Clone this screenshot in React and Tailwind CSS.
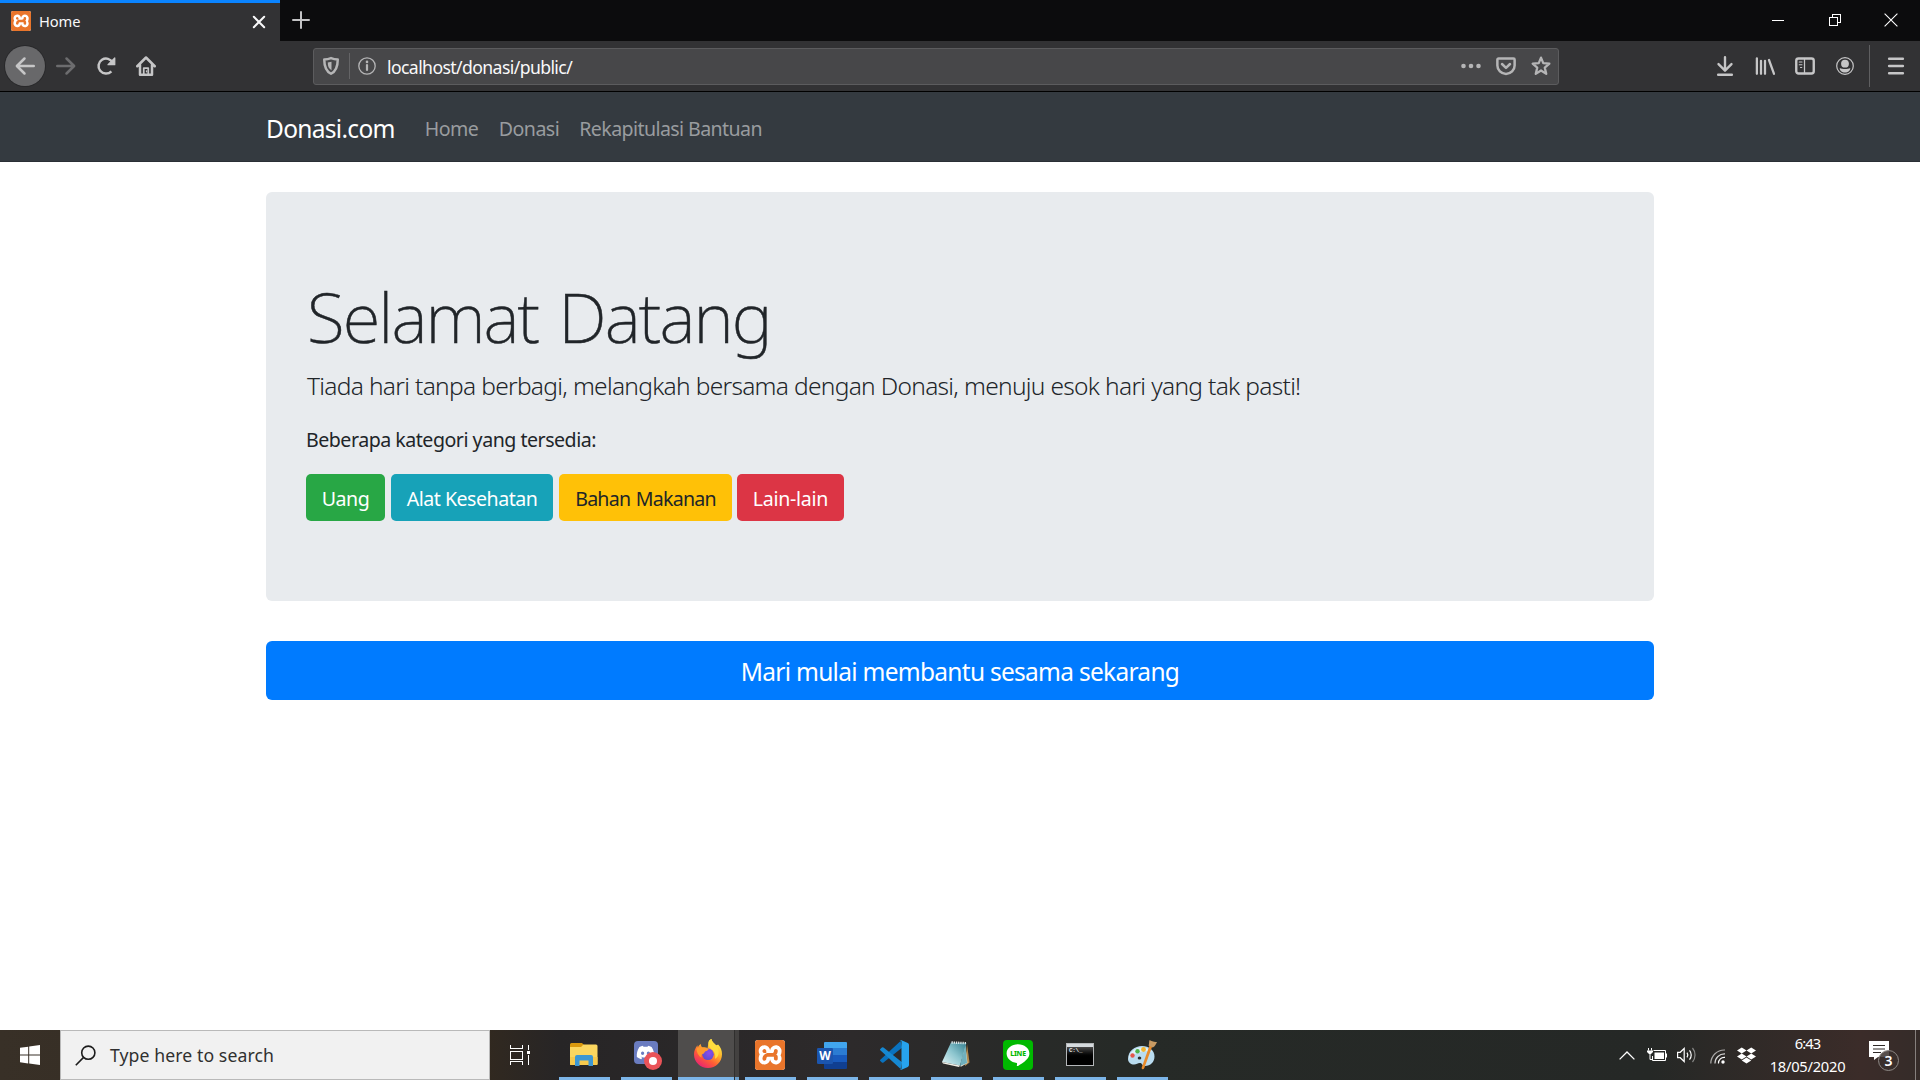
import React from "react";
import { SiXampp } from "react-icons/si";
import { FaDiscord, FaDropbox } from "react-icons/fa";

const NAV_BUTTON = "flex h-10 w-10 shrink-0 items-center justify-center";

function Glyph({ children, className = "h-5 w-5", box = "0 0 16 16" }) {
  return (
    <svg
      viewBox={box}
      className={className}
      fill="none"
      stroke="currentColor"
      strokeWidth="2"
      strokeLinecap="round"
      strokeLinejoin="round"
    >
      {children}
    </svg>
  );
}

function XamppLogo({ className }) {
  return (
    <span className={`flex items-center justify-center overflow-hidden bg-white ${className}`}>
      <SiXampp className="h-full w-full scale-105 text-[#e9752b]" />
    </span>
  );
}

function TitleBar() {
  return (
    <div className="flex h-[41px] bg-[#0c0c0d] text-[#f9f9fa]">
      <div className="flex w-[280px] items-start border-t-[3px] border-[#0a84ff] bg-[#323234] pt-[8px] pl-[11px] pr-[14px]">
        <XamppLogo className="h-5 w-5 rounded-[2px]" />
        <span className="ml-[8px] flex-1 text-[14.7px] leading-5 tracking-[-0.1px]">Home</span>
        <svg viewBox="0 0 14 14" className="mt-[4px] h-[14px] w-[14px]" stroke="currentColor" strokeWidth="2" strokeLinecap="round">
          <path d="M1.8 1.8l10.4 10.4M12.2 1.8L1.8 12.2" />
        </svg>
      </div>
      <svg viewBox="0 0 18 18" className="mt-[11px] ml-[12px] h-[18px] w-[18px] text-[#c4c4c5]" stroke="currentColor" strokeWidth="2" strokeLinecap="round">
        <path d="M9 1v16M1 9h16" />
      </svg>
      <div className="ml-auto flex pb-px text-white">
        <span className="flex w-[57px] items-center justify-center">
          <span className="h-px w-3 bg-white" />
        </span>
        <span className="flex w-[57px] items-center justify-center">
          <svg viewBox="0 0 12 12" className="h-3 w-3" fill="none" stroke="currentColor" shapeRendering="crispEdges">
            <path d="M.5 3.5h8v8h-8zM3.5 3V.5h8v8H9" />
          </svg>
        </span>
        <span className="flex w-[57px] items-center justify-center pr-px">
          <svg viewBox="0 0 14 14" className="h-[14px] w-[14px]" stroke="currentColor" strokeWidth="1.1">
            <path d="M.6.6l12.8 12.8M13.4.6L.6 13.4" />
          </svg>
        </span>
      </div>
    </div>
  );
}

function AddressBar() {
  return (
    <div className="ml-[147px] flex h-[37px] w-[1246px] shrink-0 items-center rounded-[3px] border border-[#5c5c5e] bg-[#474749] text-[#b5b5b6]">
      <Glyph className="ml-[7px] h-5 w-5">
        <path d="M8 1.700c1.800.7 3.600 1 5.400 1 0 5.400-1 9.200-5.400 11.500C3.600 11.900 2.600 8.100 2.600 2.700c1.800 0 3.600-.3 5.400-1z" />
        <path d="M8.400 4.600L5.400 5.200c0 3 .7 4.800 3 6.200z" fill="currentColor" stroke="none" />
      </Glyph>
      <span className="ml-[8px] h-[26px] w-px bg-[#646466]" />
      <svg viewBox="0 0 18 18" className="ml-[8px] h-[18px] w-[18px]" fill="none" stroke="currentColor">
        <circle cx="9" cy="9" r="8.200" strokeWidth="1.300" />
        <path d="M9 8v5" strokeWidth="2.200" strokeLinecap="round" />
        <circle cx="9" cy="4.900" r="1.300" fill="currentColor" stroke="none" />
      </svg>
      <span className="ml-[11px] flex-1 pt-[2px] text-[17.640px] leading-6 tracking-[-0.6px] text-[#f9f9fa]">localhost/donasi/public/</span>
      <svg viewBox="0 0 20 6" className="h-[6px] w-5" fill="currentColor">
        <circle cx="2.500" cy="3" r="2.300" />
        <circle cx="10" cy="3" r="2.300" />
        <circle cx="17.500" cy="3" r="2.300" />
      </svg>
      <Glyph className="ml-[15px] h-5 w-5">
        <path d="M2 2h12a.9.900 0 0 1 .9.900v4.600a6.900 6.900 0 0 1-13.800 0V2.900A.9.900 0 0 1 2 2z" />
        <path d="M4.800 6.400L8 9.500l3.200-3.100" />
      </Glyph>
      <Glyph className="mr-[7px] ml-[15px] h-5 w-5">
        <path d="M8 1.300l1.800 4.400 4.900.4-3.700 3.200 1.200 5-4.200-2.700-4.200 2.700 1.200-5L1.300 6.100l4.900-.4z" strokeWidth="1.800" />
      </Glyph>
    </div>
  );
}

function Toolbar() {
  return (
    <div className="flex h-[51px] items-center border-b border-black bg-[#323234] pl-[5px] text-[#c6c6c7]">
      <span className={`${NAV_BUTTON} rounded-full bg-[#68686a] ring-1 ring-[#29292b]`}>
        <Glyph>
          <path d="M15 8H1.600M7.600 2L1.500 8l6.100 6" />
        </Glyph>
      </span>
      <span className={`${NAV_BUTTON} ml-px text-[#6c6c6e]`}>
        <Glyph>
          <path d="M1 8h13.400M8.400 2l6.100 6-6.100 6" />
        </Glyph>
      </span>
      <span className={NAV_BUTTON}>
        <Glyph>
          <path d="M12.300 12.300A6 6 0 1 1 13.400 5.400" strokeLinecap="butt" />
          <path d="M15 1.500v5.400H9.600z" fill="currentColor" strokeWidth="1" />
        </Glyph>
      </span>
      <span className={NAV_BUTTON}>
        <Glyph>
          <path d="M1 8.200l7-7 7 7M3.200 7v8h9.600V7" />
          <path d="M6.200 15V9.600h3.600V15" strokeWidth="1.400" />
          <path d="M8.400 11.800v.8" strokeWidth="1" />
        </Glyph>
      </span>
      <AddressBar />
      <div className="ml-auto flex items-center pr-1">
        <span className={NAV_BUTTON}>
          <Glyph>
            <path d="M8 1v10M2.800 6.500L8 11.700l5.200-5.200M2.500 15h11" strokeWidth="1.900" />
          </Glyph>
        </span>
        <span className={NAV_BUTTON}>
          <Glyph>
            <path d="M1.500 1.800v12.400M4.800 3.800v10.400M8 3.800v10.400M11.200 3.200l4 11" strokeWidth="1.800" />
          </Glyph>
        </span>
        <span className={NAV_BUTTON}>
          <Glyph>
            <rect x="1" y="2" width="14" height="12" rx="1.800" strokeWidth="1.900" />
            <path d="M7.600 2v12" strokeWidth="1" />
            <path d="M3.400 4.800h2.200M3.400 7h2.200M4.400 9.200h1" strokeWidth=".9" />
          </Glyph>
        </span>
        <span className={NAV_BUTTON}>
          <svg viewBox="0 0 18 18" className="h-[18px] w-[18px]" fill="currentColor">
            <circle cx="9" cy="9" r="8.300" fill="none" stroke="currentColor" strokeWidth="1.200" />
            <circle cx="9" cy="6.700" r="3.900" />
            <path d="M3.800 10.900c2.300 1.400 8.100 1.400 10.400 0 .3 2.500-2.100 4.600-5.200 4.600s-5.500-2.100-5.200-4.600z" />
          </svg>
        </span>
        <span className="mr-[6px] ml-[4px] h-[42px] w-px bg-[#5f5f61]" />
        <span className={NAV_BUTTON}>
          <Glyph>
            <path d="M2.500 2.200h11M2.500 8h11M2.500 13.800h11" />
          </Glyph>
        </span>
      </div>
    </div>
  );
}

function SiteNav() {
  return (
    <nav className="h-[70px] border-b border-[#2a2f35] bg-[#343a40] pt-[5px]">
      <div className="mx-auto flex h-full w-[1388px] items-center leading-[30px]">
        <a className="text-[24.500px] tracking-[-0.7px] text-white">Donasi.com</a>
        <a className="ml-[30px] text-[19.600px] tracking-[-0.564px] text-[#999c9f]">Home</a>
        <a className="ml-[20.500px] text-[19.600px] tracking-[-0.529px] text-[#999c9f]">Donasi</a>
        <a className="ml-[20px] text-[19.600px] tracking-[-0.600px] text-[#999c9f]">Rekapitulasi Bantuan</a>
      </div>
    </nav>
  );
}

const CATEGORY = "flex h-[47px] items-center justify-center rounded-[5px] pt-[3px] text-[19.600px]";

function Jumbotron() {
  return (
    <section className="mt-[30px] h-[409px] rounded-[6px] bg-[#e8ebee] px-10 pt-[82px] text-[#212529]">
      <h1 className="mb-[9px] pl-px text-[69px] leading-[84px] font-extralight tracking-[-1.9px] [-webkit-text-stroke:0.5px_#212529] [word-spacing:4px]">Selamat Datang</h1>
      <p className="mb-5 pl-px text-[24.500px] leading-[37.500px] font-light tracking-[-0.715px] [word-spacing:0.2px] whitespace-nowrap">
        Tiada hari tanpa berbagi, melangkah bersama dengan Donasi, menuju esok hari yang tak pasti!
      </p>
      <p className="mb-[19.500px] text-[19.600px] leading-[30px] tracking-[-0.490px]">Beberapa kategori yang tersedia:</p>
      <div className="flex text-white">
        <a className={`${CATEGORY} w-[79px] bg-[#28a745] tracking-[-0.475px]`}>Uang</a>
        <a className={`${CATEGORY} ml-[6px] w-[162px] bg-[#17a2b8] tracking-[-0.501px]`}>Alat Kesehatan</a>
        <a className={`${CATEGORY} ml-[6px] w-[173px] bg-[#ffc107] tracking-[-0.750px] text-[#212529]`}>
          <span className="[word-spacing:1px]">Bahan Makanan</span>
        </a>
        <a className={`${CATEGORY} ml-[5px] w-[107px] bg-[#dc3545] tracking-[-0.292px]`}>Lain-lain</a>
      </div>
    </section>
  );
}

function FolderIcon() {
  return (
    <svg viewBox="0 0 28 24" className="h-6 w-7">
      <path d="M0 1.500A1.500 1.500 0 0 1 1.500 0H12l2 2-2 2.500H0z" fill="#d9980d" />
      <path d="M0 4h11l2.500-2.500H26A1.500 1.500 0 0 1 27.500 3v18a1 1 0 0 1-1 1H1a1 1 0 0 1-1-1z" fill="#fbd65f" />
      <path d="M0 14h27.500v7a1 1 0 0 1-1 1H1a1 1 0 0 1-1-1z" fill="#f6c94c" />
      <path d="M5 23V14a2 2 0 0 1 2-2h14a2 2 0 0 1 2 2v9h-4.500v-5.500h-9V23z" fill="#3d97d3" />
    </svg>
  );
}

function DiscordIcon() {
  return (
    <span className="relative ml-[3px] flex h-7 w-7">
      <span className="flex h-[23px] w-6 items-center justify-center rounded-[4px] bg-[#6a7cc0]">
        <FaDiscord className="h-[19px] w-[19px] text-white" />
      </span>
      <span className="absolute top-[11px] left-[10px] flex h-[18px] w-[18px] items-center justify-center rounded-full bg-[#ea5358]">
        <span className="h-2 w-2 rounded-full bg-white" />
      </span>
    </span>
  );
}

function FirefoxIcon() {
  return (
    <svg viewBox="0 0 30 30" className="h-[30px] w-[30px]">
      <defs>
        <linearGradient id="ffBody" x1=".85" y1=".1" x2=".25" y2="1">
          <stop offset="0" stopColor="#fff04a" />
          <stop offset=".35" stopColor="#ffb129" />
          <stop offset=".65" stopColor="#ff5d35" />
          <stop offset="1" stopColor="#e81f76" />
        </linearGradient>
        <radialGradient id="ffGlobe" cx=".6" cy=".4" r=".6">
          <stop offset="0" stopColor="#8f4bee" />
          <stop offset="1" stopColor="#5b4fd0" />
        </radialGradient>
      </defs>
      <path d="M15.500 3.600c.3-2 1.500-3 3-3.600.2 2.800 2.600 4.300 4.600 6.200 2.500-.1 1.600-1.200 1.600-1.200 3.200 3.300 4.300 6.600 4.300 10.200C29 23 22.800 29 15 29S1 22.900 1 15.400c0-3.700 1.400-6.700 3.500-9.200 0 0 0 1.400.4 2.100C5.400 6.500 6.900 5.300 7.900 4.900c-.1 1.700.7 3 1.800 3.500 1.600-.3 3.400-.1 4.900.6z" fill="url(#ffBody)" />
      <circle cx="15" cy="15.300" r="5.800" fill="url(#ffGlobe)" />
      <path d="M15.500 3.600c.3-2 1.500-3 3-3.600.2 3.600 6 5.700 7 11.200.8 4.200-1 7.300-3.500 8.600.8-4-.2-6.900-2.600-8.700-2.300-1.700-4.200-4-3.900-7.500z" fill="#ffdc3e" />
      <path d="M3.500 9.500c2.600-1.600 5.800-1.600 8.600-.4.900.5 2.700.5 3.600.9-.4 1.300-1.900 1.900-3.200 2.300-1 .4-.8 1.400-1.700 2.300-2 .6-2.800 1.900-2.100 4.100-3.600-2.200-5.200-5.300-5.200-9.200z" fill="#ff9a2e" />
    </svg>
  );
}

function WordIcon() {
  return (
    <span className="relative block h-7 w-[30px]">
      <svg viewBox="0 0 30 28" className="h-7 w-[30px]">
        <path d="M8 1h21a1 1 0 0 1 1 1v5H7V2a1 1 0 0 1 1-1z" fill="#41a5ee" />
        <path d="M7 7h23v7H7z" fill="#2b7cd3" />
        <path d="M7 14h23v7H7z" fill="#185abd" />
        <path d="M7 21h23v6a1 1 0 0 1-1 1H8a1 1 0 0 1-1-1z" fill="#103f91" />
        <rect x="0" y="7" width="16" height="16" rx="1.300" fill="#1b55ae" />
      </svg>
      <span className="absolute top-[7px] left-0 w-4 text-center text-[12px] leading-4 font-bold text-white">W</span>
    </span>
  );
}

function CodeIcon() {
  return (
    <svg viewBox="0 0 30 30" className="h-[30px] w-[30px]">
      <path d="M1.300 19.700L21.600.9 23 7.700 4.500 22.400a1.300 1.300 0 0 1-1.600 0l-1.600-1.300a1 1 0 0 1 0-1.400z" fill="#0a72be" />
      <path d="M1.300 10.300L21.600 29.100 23 22.300 4.500 7.600a1.300 1.300 0 0 0-1.600 0L1.300 8.900a1 1 0 0 0 0 1.400z" fill="#1688d2" />
      <path d="M22.500.2l6.300 2.900A2 2 0 0 1 30 4.900v20.200a2 2 0 0 1-1.200 1.800l-6.300 2.900c-.8.300-1.500 0-1.900-.5.8.6 1.900.1 1.900-.9V1.600c0-1-1.100-1.500-1.900-.9.400-.6 1.100-.8 1.900-.5z" fill="#27a3ee" />
    </svg>
  );
}

function NotepadIcon() {
  return (
    <svg viewBox="0 0 30 30" className="h-[30px] w-[30px]">
      <defs>
        <linearGradient id="padSheet" x1="1" y1="0" x2="0" y2="1">
          <stop offset="0" stopColor="#337f90" />
          <stop offset=".5" stopColor="#8dc6cf" />
          <stop offset="1" stopColor="#e3f4f5" />
        </linearGradient>
      </defs>
      <path d="M26 4l2.500 18.500L24 26z" fill="#b28a4e" />
      <path d="M24 3l2.500 20-7 4z" fill="#e6e2d4" />
      <path d="M10 2.500L25.500 3 19 25.500 1 22z" fill="url(#padSheet)" />
      <path d="M1 22l18 3.500-1 1.500L2 23.500z" fill="#f1efe6" />
      <path d="M24.500 5l1.500 18-7 3z" fill="#6fb0bd" />
      <path d="M10.500 2.500L25.500 3.200" stroke="#dfe5e5" strokeWidth="2.400" strokeDasharray="1.300 .9" />
    </svg>
  );
}

function LineIcon() {
  return (
    <span className="relative block h-[30px] w-[30px] rounded-[4px] bg-[#00b900]">
      <svg viewBox="0 0 30 30" className="h-full w-full">
        <path d="M15 4.200c6.300 0 11.400 4.100 11.400 9.200 0 2.100-.8 3.900-2.500 5.800-2.400 2.800-7.800 6.200-9 6.700-1.300.5-1.100-.3-1-.6l.2-1.200c0-.4 0-1-.3-1.200-5.700-.7-10.200-4.700-10.200-9.500 0-5.100 5.100-9.200 11.400-9.200z" fill="#fff" />
      </svg>
      <span className="absolute top-[9px] left-0 w-full text-center text-[7px] leading-[9px] font-extrabold tracking-[-0.2px] text-[#00b900]">LINE</span>
    </span>
  );
}

function TerminalIcon() {
  return (
    <span className="flex h-[23px] w-[28px] flex-col border border-[#b4b7b9] bg-black">
      <span className="h-[3px] bg-[#d5dadd]" />
      <span className="flex-1 bg-linear-to-b from-[#4a4a4a] to-black to-60% pl-[2px] font-['Liberation_Mono'] text-[6px] leading-[7px] font-bold tracking-[-0.3px] text-[#e8e8e8]">C:\_</span>
    </span>
  );
}

function PaintIcon() {
  return (
    <svg viewBox="0 0 30 30" className="h-[30px] w-[30px]">
      <path d="M1 19C1 11 8 6 15 6s12.500 4.500 12.500 10.500c0 5.500-4 9.500-9.500 9.500-3 0-2.500-2.500-4.500-3-2.500-.6-3.500 1.500-6.500 1.500S1 22.500 1 19z" fill="#b9dcf0" />
      <path d="M2 19c0-7 6.500-11.500 12.500-11.500 5 0 9 2 11 5C19 9 5 13 2 19z" fill="#e0f1fa" />
      <circle cx="5.500" cy="15.500" r="2.200" fill="#e2574c" />
      <circle cx="10.500" cy="11.300" r="2.200" fill="#4db34a" />
      <circle cx="16.500" cy="9.500" r="2.400" fill="#f2b632" />
      <ellipse cx="12.500" cy="18" rx="1.800" ry="1.600" fill="#2b2d2c" />
      <path d="M22.600 5.300l2.600 1.300L17.200 28.200c-.6 1.500-3 1.200-2.500-.8z" fill="#e88b2c" />
      <path d="M25.800 7.500L21.500 5.500c1-1.800.2-3.700 1.200-5.500 1.500 1.200 4.500 2.200 7.300 1.900-1 1.600-1.800 4.600-4.200 5.600z" fill="#c79a63" />
    </svg>
  );
}

const APPS = [
  { name: "files", icon: <FolderIcon /> },
  { name: "discord", icon: <DiscordIcon /> },
  { name: "firefox", icon: <FirefoxIcon />, active: true },
  { name: "xampp", icon: <XamppLogo className="h-[30px] w-[30px] rounded-[3px]" /> },
  { name: "word", icon: <WordIcon /> },
  { name: "code", icon: <CodeIcon /> },
  { name: "notepad", icon: <NotepadIcon /> },
  { name: "line", icon: <LineIcon /> },
  { name: "terminal", icon: <TerminalIcon /> },
  { name: "paint", icon: <PaintIcon /> },
];

function TaskbarApp({ icon, active }) {
  if (active) {
    return (
      <div className="flex w-[62px] pl-px">
        <div className="flex w-[56px] flex-col bg-[#4f4d4c]">
          <span className="flex flex-1 items-center justify-center pl-[3px]">{icon}</span>
          <span className="h-[3px] bg-[#7cb5e8]" />
        </div>
        <div className="flex w-[5px] flex-col border-l border-[#302f2e] bg-[#434140]">
          <span className="mt-auto h-[3px] bg-[#6c9fcb]" />
        </div>
      </div>
    );
  }
  return (
    <div className="flex w-[62px] flex-col px-[5px]">
      <span className="flex flex-1 items-center justify-center pt-[2px]">{icon}</span>
      <span className="ml-px h-[3px] w-[51px] bg-[#7cb5e8]" />
    </div>
  );
}

function Tray() {
  return (
    <div className="ml-auto flex h-full items-center text-white">
      <svg viewBox="0 0 16 9" className="h-[9px] w-4" fill="none" stroke="currentColor" strokeWidth="1.300">
        <path d="M.6 8.400L8 1l7.400 7.400" />
      </svg>
      <svg viewBox="0 0 20 14" className="ml-3 h-[14px] w-5" fill="none" stroke="currentColor">
        <path d="M6.500 2.500h12v10h-13V8" />
        <path d="M7.500 4.500h9.500v6.500H7.500z" fill="currentColor" stroke="none" />
        <path d="M19.500 5.500v4M1.500 0v2.500M4.500 0v2.500M3 5.500v6h3" />
        <path d="M0 2.500h6v1.500L4 6H2L0 4z" fill="currentColor" stroke="none" />
      </svg>
      <svg viewBox="0 0 20 16" className="ml-[10px] h-4 w-5" fill="none" stroke="currentColor" strokeWidth="1.200">
        <path d="M.6 5.300h2.600l4-3.800v13l-4-3.800H.6z" />
        <path d="M10 5.700a4 4 0 0 1 0 4.600" />
        <path d="M12.500 3.400a7 7 0 0 1 0 9.200" />
        <path d="M15.500 1a11 11 0 0 1 0 14" opacity=".45" />
      </svg>
      <svg viewBox="0 0 15 15" className="mt-[3px] ml-[13px] h-[15px] w-[15px]" fill="none" stroke="currentColor" strokeWidth="1.200">
        <circle cx="13" cy="13" r="1.700" fill="currentColor" stroke="none" />
        <path d="M8.500 14.500A5.800 5.800 0 0 1 15 8.400" />
        <path d="M5 14.500A9.500 9.500 0 0 1 15 4.900" opacity=".8" />
        <path d="M.8 14.500A13.500 13.500 0 0 1 15 1" opacity=".6" />
      </svg>
      <FaDropbox className="ml-[12px] h-[19px] w-[19px]" />
      <div className="ml-[13px] flex h-full w-[77px] flex-col items-center justify-center text-[14.700px] leading-[23px]">
        <span className="tracking-[-0.9px]">6:43</span>
        <span className="tracking-[-0.25px]">18/05/2020</span>
      </div>
      <span className="relative mt-[5px] ml-[23px] block h-[33px] w-[31px]">
        <svg viewBox="0 0 20 19" className="h-[19px] w-5">
          <path d="M0 0h20v16H9l-4 3v-3H0z" fill="#fff" />
          <path d="M4 4.500h12M4 8h12M4 11.500h8" stroke="#2f2927" strokeWidth="1.200" />
        </svg>
        <span className="absolute top-[9px] left-[9px] flex h-[21px] w-[21px] items-center justify-center rounded-full border border-[#8d8885] bg-[#3a302d]/85 text-[14px] leading-none font-semibold">3</span>
      </span>
      <span className="ml-[15px] h-full w-px bg-[#86807d]" />
      <span className="h-full w-[4px]" />
    </div>
  );
}

function Taskbar() {
  return (
    <div className="flex h-[50px] bg-[linear-gradient(to_right,#383027_0px,#32291f_480px,#272526_560px,#2d2a2b_850px,#262a27_1120px,#252826_1650px,#3b2c29_1860px,#352c29_1920px)]">
      <span className="flex w-[60px] items-center justify-center">
        <svg viewBox="0 0 20 20" className="h-5 w-5" fill="#fff">
          <path d="M0 2.800L8.200 1.700v7.900H0zM9.200 1.500L20 0v9.600H9.200zM0 10.500h8.200v7.900L0 17.200zM9.200 10.500H20V20L9.200 18.500z" />
        </svg>
      </span>
      <div className="flex w-[430px] items-center border border-[#b9b9b9] bg-[#f1f1f1] pl-[14px]">
        <svg viewBox="0 0 21 21" className="h-[21px] w-[21px]" fill="none" stroke="#1c1c1c" strokeWidth="1.600">
          <circle cx="13.300" cy="7.700" r="6.600" />
          <path d="M8.600 12.400L.8 20.200" />
        </svg>
        <span className="ml-[14px] text-[17.640px] leading-6 tracking-[0.090px] text-[#303030]">Type here to search</span>
      </div>
      <span className="flex w-[63px] items-center pl-5">
        <svg viewBox="0 0 21 20" className="h-5 w-[21px]" fill="none" stroke="#fff" shapeRendering="crispEdges">
          <path d="M.5 0v3.500h12V0M.5 6.500h12v8H.5zM.5 20v-3.500h12V20M18.500 0v5M18.500 10v10" />
          <path d="M17 6h3v3h-3z" fill="#fff" stroke="none" />
        </svg>
      </span>
      <div className="flex">
        {APPS.map((app) => (
          <TaskbarApp key={app.name} icon={app.icon} active={app.active} />
        ))}
      </div>
      <Tray />
    </div>
  );
}

export default function App() {
  return (
    <div className="flex h-[1080px] w-[1920px] flex-col overflow-hidden bg-white font-['Noto_Sans','Open_Sans',sans-serif]">
      <TitleBar />
      <Toolbar />
      <SiteNav />
      <main className="mx-auto w-[1388px] flex-1">
        <Jumbotron />
        <a className="mt-10 flex h-[59px] items-center justify-center rounded-[6px] bg-[#007bff] pt-[3px] text-[24.500px] tracking-[-0.720px] text-white">
          Mari mulai membantu sesama sekarang
        </a>
      </main>
      <Taskbar />
    </div>
  );
}
